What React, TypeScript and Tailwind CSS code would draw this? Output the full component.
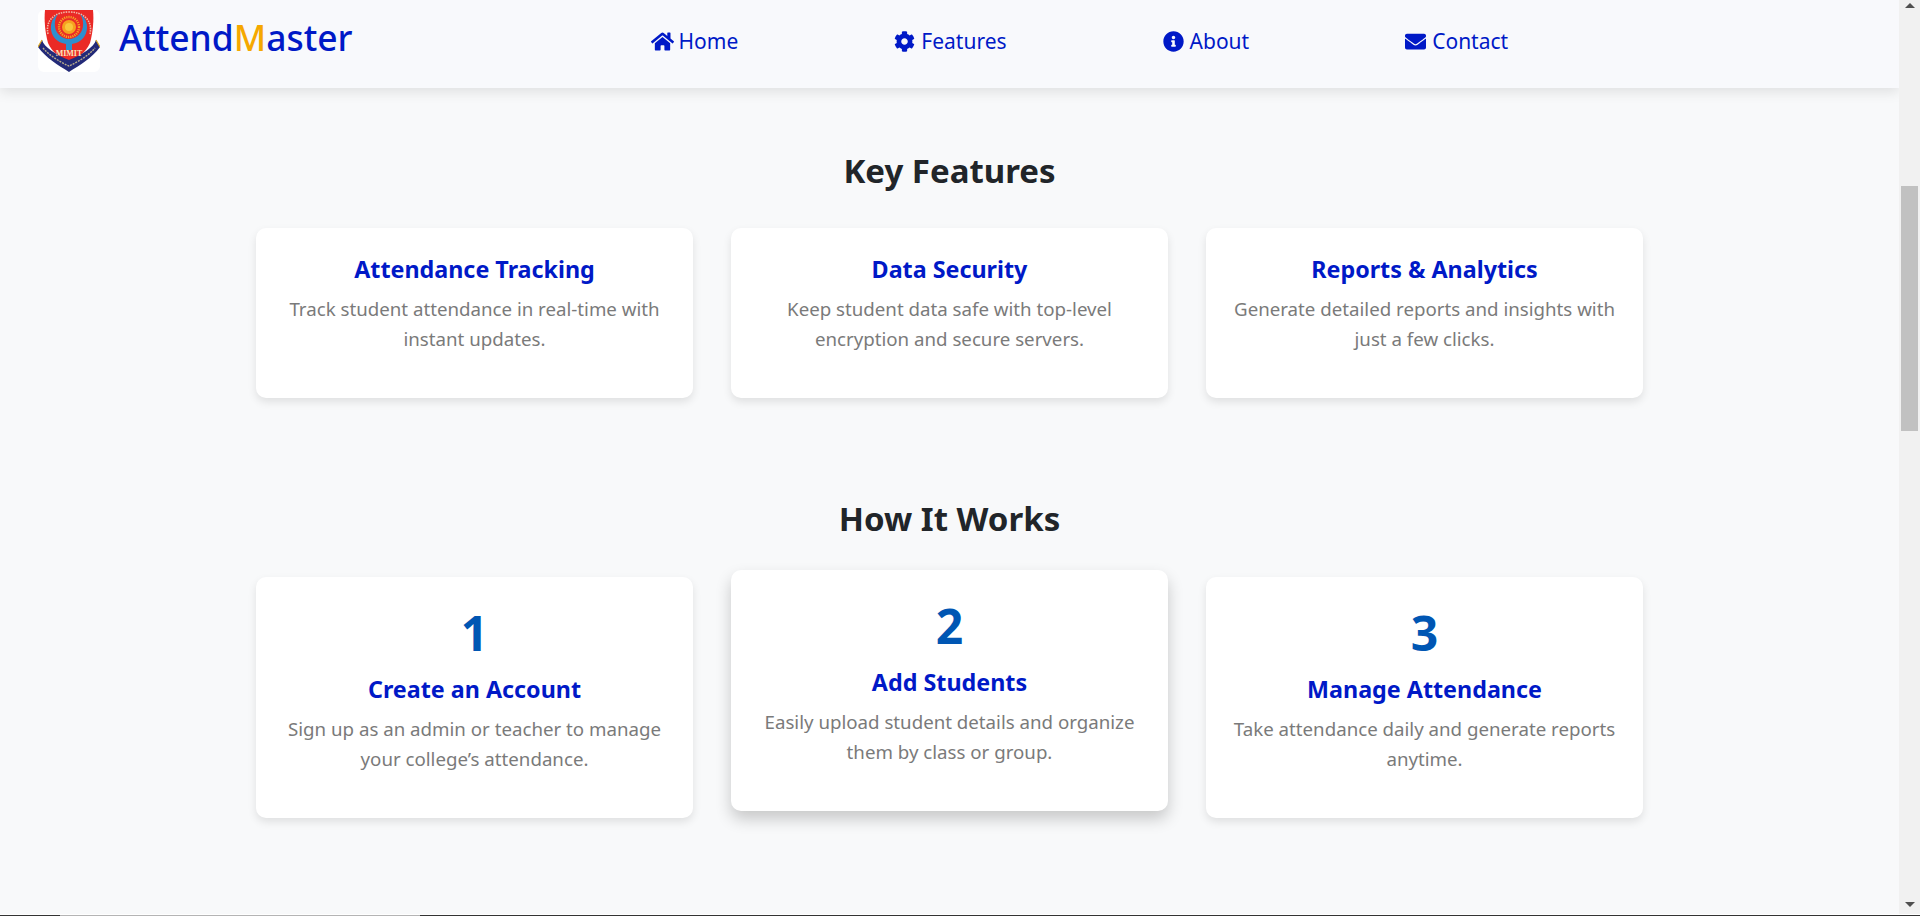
import { FaHome, FaCog, FaInfoCircle, FaEnvelope } from "react-icons/fa";

const navLinks = [
    { label: "Home", Icon: FaHome },
    { label: "Features", Icon: FaCog },
    { label: "About", Icon: FaInfoCircle },
    { label: "Contact", Icon: FaEnvelope },
];

const features = [
    { title: "Attendance Tracking", text: "Track student attendance in real-time with instant updates." },
    { title: "Data Security", text: "Keep student data safe with top-level encryption and secure servers." },
    { title: "Reports & Analytics", text: "Generate detailed reports and insights with just a few clicks." },
];

const steps = [
    { num: 1, title: "Create an Account", text: "Sign up as an admin or teacher to manage your college’s attendance." },
    { num: 2, title: "Add Students", text: "Easily upload student details and organize them by class or group.", hovered: true },
    { num: 3, title: "Manage Attendance", text: "Take attendance daily and generate reports anytime." },
];

const Logo = () => (
    <div className="w-[62px] h-[62px] rounded-[6px] bg-white shrink-0">
        <svg viewBox="0 0 62 62" className="w-full h-full">
            {/* shield */}
            <path d="M7 0H55C56 10 55 22 52 33C48 42 40 48 31 53C22 48 14 42 10 33C7 22 6 10 7 0Z" fill="#ea2a26" />
            {/* ribbon */}
            <path d="M0 37C8 48 20 55 31 62C42 55 54 48 62 37L58 30C56 37 44 45 31 50C18 45 6 37 4 30Z" fill="#232a78" />
            <path d="M5 38C12 46 22 52 31 56C40 52 50 46 57 38" fill="none" stroke="#b9ad8c" strokeWidth="1.4" strokeDasharray="2 1" />
            <path d="M0 37L4 30M62 37L58 30" stroke="#d8a928" strokeWidth="1.2" />
            {/* arc lettering */}
            <path d="M10 24C7 10 17 2 31 2C45 2 55 10 52 24" fill="none" stroke="#f3b9a8" strokeWidth="1.6" strokeDasharray="1.5 1" />
            {/* blue arch */}
            <path d="M20 4C10 10 10 28 24 33L28 34V40H34V34L38 33C52 28 52 10 42 4C48 12 46 28 31 29C16 28 14 12 20 4Z" fill="#2e8fce" />
            {/* sun */}
            <circle cx="31" cy="17" r="10" fill="none" stroke="#f6a623" strokeWidth="2.4" strokeDasharray="1.2 1" />
            <circle cx="31" cy="17" r="7" fill="#f6a11f" />
            <circle cx="31" cy="17" r="4" fill="#f8c83c" />
            <text x="31" y="46" textAnchor="middle" fontSize="8" fontWeight="700" fill="#fbe6bd" className="font-['Liberation_Serif',serif]">MIMIT</text>
        </svg>
    </div>
);

interface CardProps {
    num?: number;
    title: string;
    text: string;
    hovered?: boolean;
}

const Card = ({ num, title, text, hovered }: CardProps) => {
    return (
        <div className={hovered
            ? "flex flex-col items-center bg-white rounded-[10px] px-[20px] pt-[27px] pb-[44px] text-center -translate-y-[7px] shadow-[0_8px_16px_rgba(0,0,0,0.2)]"
            : "flex flex-col items-center bg-white rounded-[10px] px-[20px] pt-[27px] pb-[44px] text-center shadow-[0_4px_8px_rgba(0,0,0,0.1)]"}>
            {num !== undefined && (
                <span className="text-[48px] leading-[58px] font-bold text-[#0056b3] mb-[13px]">{num}</span>
            )}
            <h3 className="text-[23.3px] leading-[29px] font-bold text-[#0019c7] mb-[10px]">{title}</h3>
            <p className="text-[18.7px] leading-[30px] text-[#7a7a7a]">{text}</p>
        </div>
    );
};

export default function App() {
    return (
        <div className="flex flex-col w-full h-[916px] overflow-hidden bg-[#f8f9fa] font-['Noto_Sans',sans-serif]">
            <div className="flex flex-row flex-1 min-h-0">
                <div className="flex flex-col flex-1 min-w-0">
                    {/* navbar */}
                    <header className="flex flex-row items-start h-[88px] bg-[#f8f9fc] pl-[38px] pt-[10px] shadow-[0_4px_12px_rgba(0,0,0,0.1)]">
                        <Logo />
                        <span className="ml-[19px] mt-[5px] text-[35.4px] leading-[44px] font-medium text-[#0019c7]">
                            Attend<span className="text-[#f5a800]">M</span>aster
                        </span>
                        <ul className="flex flex-row gap-[155px] ml-[298px] pt-[16px]">
                            {navLinks.map(({ label, Icon }) => (
                                <li key={label} className="flex flex-row items-center gap-[5px] text-[21px] leading-[30px] text-[#0019c7]">
                                    <Icon className="w-[23px] h-[21px]" />
                                    {label}
                                </li>
                            ))}
                        </ul>
                    </header>
                    {/* sections */}
                    <main className="flex flex-col w-[1387px] mx-auto">
                        <h2 className="mt-[60px] text-[33px] leading-[46px] font-bold text-[#212529] text-center">Key Features</h2>
                        <div className="grid grid-cols-3 gap-[38px] mt-[34px]">
                            {features.map((f) => <Card key={f.title} title={f.title} text={f.text} />)}
                        </div>
                        <h2 className="mt-[98px] text-[33px] leading-[46px] font-bold text-[#212529] text-center">How It Works</h2>
                        <div className="grid grid-cols-3 gap-[38px] mt-[35px]">
                            {steps.map((s) => <Card key={s.num} num={s.num} title={s.title} text={s.text} hovered={s.hovered} />)}
                        </div>
                    </main>
                </div>
                {/* scrollbar */}
                <div className="flex flex-col items-center w-[21px] shrink-0 bg-[#f1f1f1]">
                    <svg viewBox="0 0 10 5" className="w-[10px] h-[5px] mt-[3px]">
                        <path d="M5 0L10 5H0Z" fill="#505050" />
                    </svg>
                    <div className="w-[17px] h-[245px] mt-[178px] bg-[#c1c1c1]" />
                    <svg viewBox="0 0 10 5" className="w-[10px] h-[5px] mt-auto mb-[7px]">
                        <path d="M0 0H10L5 5Z" fill="#505050" />
                    </svg>
                </div>
            </div>
            {/* window edge */}
            <div className="flex flex-row w-full h-[2px] shrink-0 border-t border-white bg-[#333333]">
                <div className="w-[360px] ml-[60px] bg-[#b4b4b4]" />
            </div>
        </div>
    );
}
